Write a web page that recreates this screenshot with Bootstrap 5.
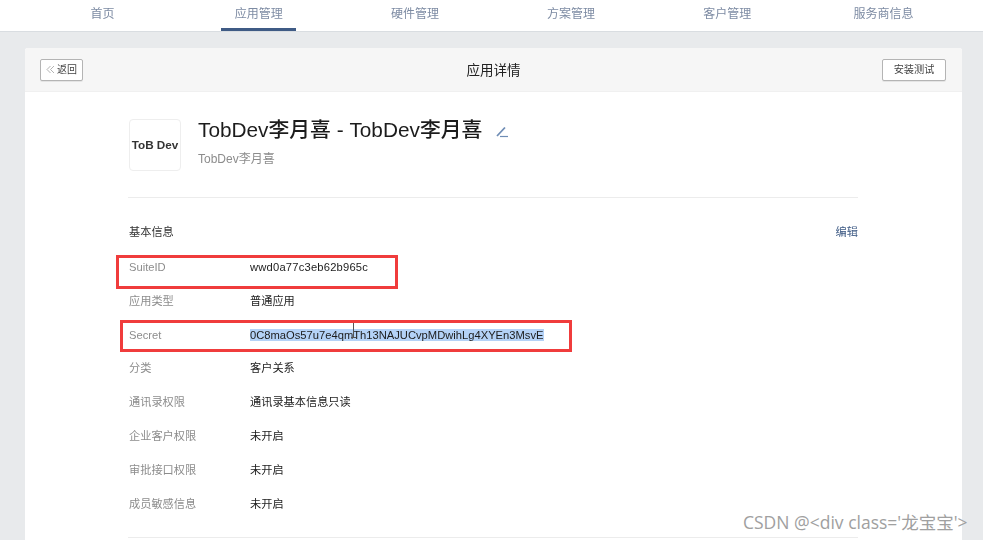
<!DOCTYPE html>
<html lang="zh">
<head>
<meta charset="utf-8">
<title>应用详情</title>
<link href="https://cdn.jsdelivr.net/npm/bootstrap@5.3.0/dist/css/bootstrap.min.css" rel="stylesheet">
<style>
html,body{height:540px;overflow:hidden}
body{background:#e8eaec;font-family:"Liberation Sans","Noto Sans CJK SC",sans-serif;color:#1a1a1a;position:relative}
.shot{filter:blur(.5px)}
.topnav{height:32px;background:#fff;border-bottom:1px solid #d9dde1;padding:0 21.5px 0 24.5px}
.topnav a{flex:1 1 0;display:flex;justify-content:center;height:31px;padding-top:6px;font-size:12px;line-height:17px;color:#7d8ba3;text-decoration:none}
.topnav a span{display:block;width:75px;text-align:center;height:25px}
.topnav a.on span{border-bottom:3px solid #3f5b85}
.panel{margin:16px 21px 0 25px;background:#fff;border-radius:3px 3px 0 0;height:500px}
.panelhead{height:44px;background:#f6f6f6;border-bottom:1px solid #f0f0f0;padding:0 16px 0 15px;position:relative;border-radius:3px 3px 0 0}
.panelhead h1{position:absolute;left:0;right:0;top:14px;margin:0;font-size:13.5px;line-height:17px;font-weight:400;text-align:center;color:#222}
.smallbtn{height:22px;padding:0;background:#fff;border:1px solid #b4b4b4;border-radius:2px;font-size:10px;line-height:20px;color:#444;display:flex;align-items:center;justify-content:center;box-shadow:0 1px 0 #e4e4e4}
.backbtn{width:43px;gap:2px}
.testbtn{width:64px;font-size:10.2px}
.inner{margin:0 104px 0 103px;padding-top:27px}
.appicon{width:52px;height:52px;margin-left:1px;border:1px solid #eee;border-radius:4px;font-size:11.7px;font-weight:700;color:#333;white-space:nowrap}
.headtext{margin-left:17px}
.apptitle{font-size:20.8px;line-height:24px;color:#1c1c1c;margin:-1px 0 0}
.penicon{margin-left:14px;margin-top:4px}
.appsub{font-size:12px;line-height:14px;color:#8c8c8c;margin-top:10px}
.sep{height:1px;background:#ececec;border:0;opacity:1;margin:0}
.toprow{height:78px}
.sechead{font-size:11.2px;line-height:14px;padding:27px 0 0 1px;height:62px;color:#333}
.sechead a{color:#3f5b85;text-decoration:none}
.inforow{height:33.8px;font-size:11.2px;line-height:14px}
.inforow .lbl{width:122px;color:#8c8c8c;padding-left:1px}
.inforow .val{color:#1c1c1c}
.wideval{letter-spacing:.2px}
.picked{background:#b4d2f7}
.lastsep{margin-top:7px}
.cursor{position:absolute;left:351px;top:322px;width:5px;height:16px}
.redbox{position:absolute;border:3px solid #f03c3c}
.box1{left:116px;top:255px;width:282px;height:34px}
.box2{left:120px;top:320px;width:452px;height:32px}
.mark-csdn{position:absolute;left:743px;top:510px;font-family:"Open Sans","Noto Sans CJK SC",sans-serif;font-size:17.5px;line-height:24px;color:#a0a0a0;white-space:nowrap}
</style>
</head>
<body>
<div class="shot">
<nav class="topnav d-flex">
  <a href="#"><span>首页</span></a>
  <a href="#" class="on"><span>应用管理</span></a>
  <a href="#"><span>硬件管理</span></a>
  <a href="#"><span>方案管理</span></a>
  <a href="#"><span>客户管理</span></a>
  <a href="#"><span>服务商信息</span></a>
</nav>
<main class="panel">
  <div class="panelhead d-flex align-items-center justify-content-between">
    <button class="smallbtn backbtn" type="button">
      <svg width="9" height="9" viewBox="0 0 9 9" fill="none" stroke="#aaa" stroke-width=".9"><path d="M4.5 1 1 4.5 4.5 8M8 1 4.5 4.5 8 8"/></svg>返回
    </button>
    <h1>应用详情</h1>
    <button class="smallbtn testbtn" type="button">安装测试</button>
  </div>
  <div class="inner">
    <div class="d-flex toprow">
      <div class="appicon d-flex align-items-center justify-content-center">ToB Dev</div>
      <div class="headtext">
        <div class="d-flex align-items-center">
          <h2 class="apptitle">TobDev李月喜 - TobDev李月喜</h2>
          <svg class="penicon" width="14" height="14" viewBox="0 0 14 14" fill="none" stroke="#6f8db5"><path stroke-width="1.8" d="M1 10 9 1.5"/><path stroke-width="1.2" d="M4 10.5h8"/></svg>
        </div>
        <div class="appsub">TobDev李月喜</div>
      </div>
    </div>
    <hr class="sep">
    <div class="sechead d-flex justify-content-between">
      <span>基本信息</span><a href="#">编辑</a>
    </div>
    <div class="inforow d-flex"><div class="lbl">SuiteID</div><div class="val wideval">wwd0a77c3eb62b965c</div></div>
    <div class="inforow d-flex"><div class="lbl">应用类型</div><div class="val">普通应用</div></div>
    <div class="inforow d-flex"><div class="lbl">Secret</div><div class="val"><span class="picked">0C8maOs57u7e4qmTh13NAJUCvpMDwihLg4XYEn3MsvE</span></div></div>
    <div class="inforow d-flex"><div class="lbl">分类</div><div class="val">客户关系</div></div>
    <div class="inforow d-flex"><div class="lbl">通讯录权限</div><div class="val">通讯录基本信息只读</div></div>
    <div class="inforow d-flex"><div class="lbl">企业客户权限</div><div class="val">未开启</div></div>
    <div class="inforow d-flex"><div class="lbl">审批接口权限</div><div class="val">未开启</div></div>
    <div class="inforow d-flex"><div class="lbl">成员敏感信息</div><div class="val">未开启</div></div>
    <hr class="sep lastsep">
  </div>
</main>
<svg class="cursor" viewBox="0 0 5 16" fill="none" stroke="#555" stroke-width="1"><path d="M0 .5h5M2.5.5v15M0 15.5h5"/></svg>
<div class="redbox box1"></div>
<div class="redbox box2"></div>
</div>
<div class="mark-csdn">CSDN @&lt;div class='龙宝宝'&gt;</div>
<script src="https://cdn.jsdelivr.net/npm/bootstrap@5.3.0/dist/js/bootstrap.bundle.min.js"></script>
</body>
</html>
